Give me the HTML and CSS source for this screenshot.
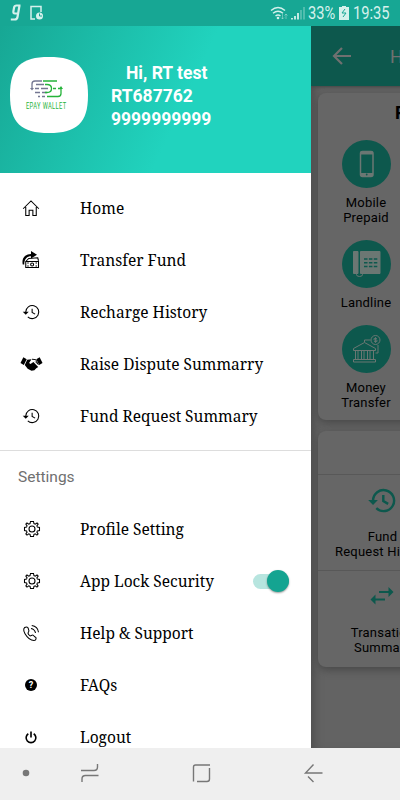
FILE: index.html
```html
<!DOCTYPE html>
<html lang="en">
    <head>
        <title>Epay Wallet</title>

        <meta charset="utf-8">
        <meta name="viewport" content="width=device-width, initial-scale=1">

        <link rel="stylesheet" href="styles.css">
    </head>

    <body>
        <svg width="0" height="0" class="defs">
            <symbol id="history" viewBox="0 0 24 24">
                <path d="M5 12a8.700 8.700 0 1 1 2.700 6.400"/>
                <path d="M1 11.500h8L5 15.700z" class="solid"/>
                <path d="M13.500 7.500v5l4 2.300"/>
            </symbol>
            <symbol id="gear" viewBox="0 0 24 24">
                <path d="M10 2h4l.6 2.800 1.700.7L18.700 4l1.500 1.500-1.700 2.300.7 1.700L22 10v4l-2.800.5-.7 1.700 1.600 2.400-1.500 1.500-2.300-1.600-1.700.7L14 22h-4l-.6-2.800-1.700-.7L5.300 20.100l-1.500-1.500 1.600-2.400-.7-1.700L2 14v-4l2.700-.5.7-1.700L3.800 5.500 5.300 4l2.400 1.500 1.700-.7z"/>
                <circle cx="12" cy="12" r="4"/>
            </symbol>
        </svg>
        <div class="phone">
            <div class="screen">
                <aside class="drawer">
                    <div class="profile">
                        <div class="logo">
                            <svg width="78" height="76" viewBox="0 0 78 76">
                                <path d="M39 0C67 0 78 10 78 38S67 76 39 76 0 66 0 38 11 0 39 0z" fill="#fff"/>
                                <g fill="none" stroke-width="1.300">
                                    <path d="M32 24H25q-3 0-3 3v5M26 27.500h8M25 31.500h4M31 31.500h7M25 35.500h5M32 35.500h5M28 39.500h2M32 39.500h3" stroke="#747792"/>
                                    <path d="M20 31h4l-2 2.500z" fill="#747792" stroke="none"/>
                                    <path d="M33 24h14M35 27.500h2q4.500 0 4.500 4t-4.500 4h-2M43 31.500h3M48 31.500h3M37 39.500h11q3 0 3-3V31" stroke="#25b33a"/>
                                    <path d="M49 32l2-3 2 3z" fill="#25b33a" stroke="none"/>
                                </g>
                                <text transform="translate(16 52) scale(.68 1)" textLength="59" class="brand">EPAY WALLET</text>
                            </svg>
                        </div>
                        <div class="user">
                            <div class="hello">Hi, RT test</div>
                            <div>RT687762</div>
                            <div>9999999999</div>
                        </div>
                    </div>
                    <nav class="menu">
                        <div class="item">
                            <svg class="icon" viewBox="0 0 24 24"><path d="M1.500 13L12 2.500 22.500 13M5 10.500V22h4.500v-7h5v7H19V10.500"/></svg>
                            <span>Home</span>
                        </div>
                        <div class="item">
                            <svg class="icon" viewBox="0 0 24 24">
                                <path class="solid" d="M1 18C-1 9 5 4 12 4V0l8 5-8 5V7C7 7 3 10 3 18z"/>
                                <path d="M5 14l4-4 12-1 1 4M5 14h17v8H5z"/>
                                <circle cx="13.500" cy="18" r="2"/>
                                <path d="M7 16h2M18 16h2M7 20h2M18 20h2"/>
                            </svg>
                            <span>Transfer Fund</span>
                        </div>
                        <div class="item">
                            <svg class="icon"><use href="#history"/></svg>
                            <span>Recharge History</span>
                        </div>
                        <div class="item">
                            <svg class="icon wide" viewBox="0 0 24 18">
                                <path class="solid" d="M3.500 2L7 4 4 10 .5 8zM20.500 2L17 4l3 6 3.500-2zM7.500 4.500L12 4 9.500 8l1.500 1 3-2 5 5-2 1.500-2 2-3 .5-4-2-3-4z"/>
                                <path d="M12.500 4l4 .5 2.500 5-3-3" stroke-width="1"/>
                            </svg>
                            <span>Raise Dispute Summarry</span>
                        </div>
                        <div class="item">
                            <svg class="icon"><use href="#history"/></svg>
                            <span>Fund Request Summary</span>
                        </div>
                    </nav>
                    <div class="caption">Settings</div>
                    <nav class="menu settings">
                        <div class="item">
                            <svg class="icon gear"><use href="#gear"/></svg>
                            <span>Profile Setting</span>
                        </div>
                        <div class="item">
                            <svg class="icon gear"><use href="#gear"/></svg>
                            <span>App Lock Security</span>
                            <i class="toggle"></i>
                        </div>
                        <div class="item">
                            <svg class="icon" viewBox="0 0 24 24">
                                <path d="M6 4C2 4 1 8 4 13s8 9 12 9c3 0 4-4 1-5l-2-2c-1-1-3 1-4 1s-3-3-3-4 2-2 1-4L8 5q-1-1-2-1zM12 6q5 1 6 6M13 2q8 1 9 9"/>
                            </svg>
                            <span>Help &amp; Support</span>
                        </div>
                        <div class="item">
                            <b class="icon question">?</b>
                            <span>FAQs</span>
                        </div>
                        <div class="item">
                            <svg class="icon power" viewBox="0 0 24 24"><path d="M7 5a9 9 0 1 0 10 0M12 1v11"/></svg>
                            <span>Logout</span>
                        </div>
                    </nav>
                </aside>
                <main class="page">
                    <div class="toolbar">
                        <svg width="20" height="18" viewBox="0 0 20 18"><path d="M10 1L2 9l8 8M2 9h17"/></svg>
                        <span>Home</span>
                    </div>
                    <section class="card services">
                        <h2>Recharge</h2>
                        <div class="service">
                            <svg class="round" viewBox="0 0 48 48">
                                <rect x="18" y="11.500" width="12.500" height="25" rx="2" fill="none" stroke-width="1.500"/>
                                <path d="M18 13h12.500M18 34.500h12.500" stroke-width="3"/>
                                <circle cx="24.200" cy="34.500" r=".9" class="dot"/>
                            </svg>
                            <div>Mobile<br>Prepaid</div>
                        </div>
                        <div class="service">
                            <svg class="round" viewBox="0 0 48 48">
                                <path d="M11 11.500h4.500v22H11zM18 11.500h19.500v22H18z" class="fill"/>
                                <path d="M14 34v.5q0 2 3 2t3-2V34" fill="none"/>
                                <path d="M21.500 19H35M21.500 22.800H35M21.500 26.500H35" stroke-width="1.600" stroke-dasharray="3.500 1.400" class="keys"/>
                            </svg>
                            <div>Landline</div>
                        </div>
                        <div class="service">
                            <svg class="round" viewBox="0 0 48 48" fill="none">
                                <path d="M11 23.500l11-6 11 6v2H11zM13 26v8M15.500 26v8M19 26v8M21.500 26v8M25 26v8M27.500 26v8M31 26v8M11 37h22v-2.500H11zM22 17v-2h6M35.500 20v8H33"/>
                                <circle cx="33" cy="15" r="4.500"/>
                                <path d="M34.500 13.500h-3V15h3v1.500h-3M33 12v6" stroke-width=".8"/>
                            </svg>
                            <div>Money<br>Transfer</div>
                        </div>
                    </section>
                    <section class="card reports">
                        <div class="head"></div>
                        <div class="report">
                            <svg width="29" height="29"><use href="#history"/></svg>
                            <div>Fund<br>Request History</div>
                        </div>
                        <div class="report">
                            <svg width="26" height="29" viewBox="0 0 26 29"><path d="M10 10h11M6 17.500h10"/><path class="solid" d="M19.500 5l5 5-5 5zM6.500 12.500l-5 5 5 5z"/></svg>
                            <div>Transation<br>Summary</div>
                        </div>
                    </section>
                </main>
            </div>
            <header class="status">
                <svg width="34" height="18" viewBox="0 0 34 18">
                    <path d="M10.500 1.500H6.500Q4.500 1.500 4.100 3.500L3.400 7.300q-.4 2.200 1.400 2.200h3.400M9.500 1.500L7.500 13q-.4 2.500-2.800 2.500H.8" stroke-width="2.200"/>
                    <path d="M25 15h-4V2.500h10V8" stroke-width="1.500"/>
                    <circle cx="29.500" cy="12" r="3.500" class="dot"/>
                    <path d="M29.500 9.500V12H32" class="hand"/>
                </svg>
                <div class="right">
                    <svg width="36" height="15" viewBox="0 0 36 15">
                        <path d="M1 4.500q7-6 14 0M3 7.300q5-4 10 0M5.500 10q2.500-2 5 0" stroke-width="1.400"/>
                        <circle cx="8" cy="12" r="1.300" class="dot"/>
                        <path d="M12.500 8v5M11 11.500l1.500 1.500 1.500-1.500M16 13V8M14.500 9.500L16 8l1.500 1.500" stroke-width=".7" opacity=".6"/>
                        <path d="M22 13.500V12M25 13.500V10M28 13.500V7" stroke-width="1.800"/>
                        <path d="M31 13.500V4M34 13.500V1" stroke-width="1.500" opacity=".4"/>
                    </svg>
                    <span class="percent">33%</span>
                    <svg width="10" height="14" viewBox="0 0 10 14"><path class="dot" d="M3 0h4v1h3v13H0V1h3z"/><path class="hand" d="M6 3L3 7h4l-3 4"/></svg>
                    <span class="time">19:35</span>
                </div>
            </header>
            <footer class="navbar">
                <svg width="400" height="52" viewBox="0 0 400 52">
                    <circle cx="26" cy="25" r="3.300"/>
                    <path d="M81 22.500h13q3.500 0 3.500-3.500v-3M98.500 27.500h-13q-3.500 0-3.500 3.500v3M193.500 33.500V19q0-2 2-2H210M197 33.500h10q2.500 0 2.500-2.500V20M313.500 16.500l-8 8.500h17M308 28.500l5.500 5.500"/>
                </svg>
            </footer>
        </div>
    </body>
</html>
```

FILE: styles.css
```css
body {
    margin: 0;
    font-family: Roboto, "Liberation Sans", sans-serif;
}
.defs {
    position: absolute;
}
svg {
    display: block;
    flex: none;
}
.solid {
    fill: currentColor;
    stroke: none;
}
.phone {
    display: flex;
    flex-direction: column;
    width: 400px;
    height: 800px;
    overflow: hidden;
}

/* status bar */
.status {
    order: -1;
    display: flex;
    align-items: center;
    justify-content: space-between;
    flex: none;
    box-sizing: border-box;
    height: 26px;
    padding: 0 10px;
    background: #17a794;
    color: #d5f1ec;
}
.status svg {
    fill: none;
    stroke: #d5f1ec;
}
.status .dot {
    fill: #d5f1ec;
    stroke: none;
}
.status .hand {
    stroke: #17a794;
}
.right {
    display: flex;
    align-items: center;
    font-size: 17.500px;
}
.percent,
.time {
    transform: scaleX(0.84);
    transform-origin: left;
    white-space: nowrap;
}
.percent {
    width: 27px;
    margin: 0 4px 0 2px;
}
.time {
    width: 37px;
    margin-left: 4px;
}

/* drawer */
.screen {
    display: flex;
    flex: 1;
    min-height: 0;
}
.drawer {
    width: 311px;
    flex: none;
    overflow: hidden;
    background: #fff;
}
.profile {
    display: flex;
    box-sizing: border-box;
    height: 147px;
    padding: 31px 10px 0;
    background: linear-gradient(115deg, #17a794 0%, #21d3be 58%);
}
.user {
    margin: 5px 0 0 23px;
    color: #fff;
    font-weight: bold;
    font-size: 17.500px;
    line-height: 23px;
}
.hello {
    padding-left: 15px;
}
.brand {
    font: 8.500px Roboto, sans-serif;
    fill: #25b33a;
}
.menu {
    padding: 9px 0 8px;
    border-bottom: 1px solid #ddd;
}
.settings {
    padding: 0;
    border: 0;
}
.item {
    display: flex;
    align-items: center;
    height: 52px;
    padding: 0 22px 0 21px;
    font: 15.500px "Noto Serif", "Droid Serif", "DejaVu Serif Condensed", "DejaVu Serif", serif;
    font-stretch: condensed;
    color: #000;
}
.item span {
    white-space: nowrap;
}
.icon {
    width: 20px;
    height: 18px;
    flex: none;
    margin-right: 39px;
    fill: none;
    stroke: #000;
    stroke-width: 1.400;
}
.gear {
    margin: 0 38px 0 1px;
}
.wide {
    width: 23px;
    margin: 0 37px 0 -1px;
}
.question {
    width: 12px;
    height: 12px;
    margin: 0 43px 0 4px;
    border-radius: 50%;
    background: #000;
    color: #fff;
    font: bold 9px/12px Roboto, sans-serif;
    text-align: center;
}
.power {
    height: 13px;
    stroke-width: 3;
}
.caption {
    height: 52px;
    padding-left: 18px;
    font-size: 15.500px;
    line-height: 53px;
    color: #707070;
}
.toggle {
    width: 36px;
    height: 15px;
    margin-left: auto;
    border-radius: 8px;
    background: #b7e5df;
}
.toggle::before {
    content: "";
    display: block;
    width: 22px;
    height: 22px;
    margin: -4px 0 0 14px;
    border-radius: 50%;
    background: #14a491;
    box-shadow: 0 1px 2px rgba(0,0,0,0.4);
}

/* dimmed page behind the drawer */
.page {
    flex: 1;
    min-width: 0;
    overflow: hidden;
    background: #636363;
    box-shadow: inset 8px 0 8px -4px #505050;
    color: #000;
    font-size: 13px;
    line-height: 15px;
    text-align: center;
}
.toolbar {
    display: flex;
    align-items: center;
    width: 300px;
    height: 60px;
    padding-left: 21px;
    background: #0d584d;
    box-shadow: 0 1px 3px #444;
    color: #707070;
    font-size: 18px;
}
.toolbar svg {
    margin-right: 38px;
    fill: none;
    stroke: #707070;
    stroke-width: 2.200;
}
.card {
    box-sizing: border-box;
    width: 300px;
    margin-left: 7px;
    border-radius: 8px;
    background: #666;
    box-shadow: 0 3px 8px #484848;
}
.services {
    height: 327px;
    margin-top: 7px;
    padding-top: 7px;
}
.services h2 {
    margin: 0 0 15px 77px;
    font-size: 18px;
    line-height: 25px;
    text-align: left;
}
.service {
    width: 96px;
    margin-bottom: 15px;
    letter-spacing: 0.2px;
}
.round {
    width: 49px;
    height: 48px;
    margin: 0 auto 7px;
    border-radius: 50%;
    background: #0d584d;
    stroke: #6b7773;
}
.round .fill {
    fill: #6b7773;
}
.round .dot {
    fill: #0d584d;
    stroke: none;
}
.round .keys {
    stroke: #0d584d;
}
.reports {
    height: 236px;
    margin-top: 11px;
}
.head {
    height: 43px;
}
.report {
    box-sizing: border-box;
    width: 127px;
    height: 96px;
    padding-top: 11px;
    border-top: 1px solid #585858;
    letter-spacing: 0.2px;
}
.report div {
    padding-left: 2px;
}
.report svg {
    margin: 0 auto 14px;
    color: #0d584d;
    fill: none;
    stroke: currentColor;
    stroke-width: 2;
}

.navbar {
    height: 52px;
    flex: none;
    background: #efefef;
}
.navbar svg {
    fill: none;
    stroke: #777;
    stroke-width: 1.400;
}
.navbar circle {
    fill: #777;
    stroke: none;
}
```
